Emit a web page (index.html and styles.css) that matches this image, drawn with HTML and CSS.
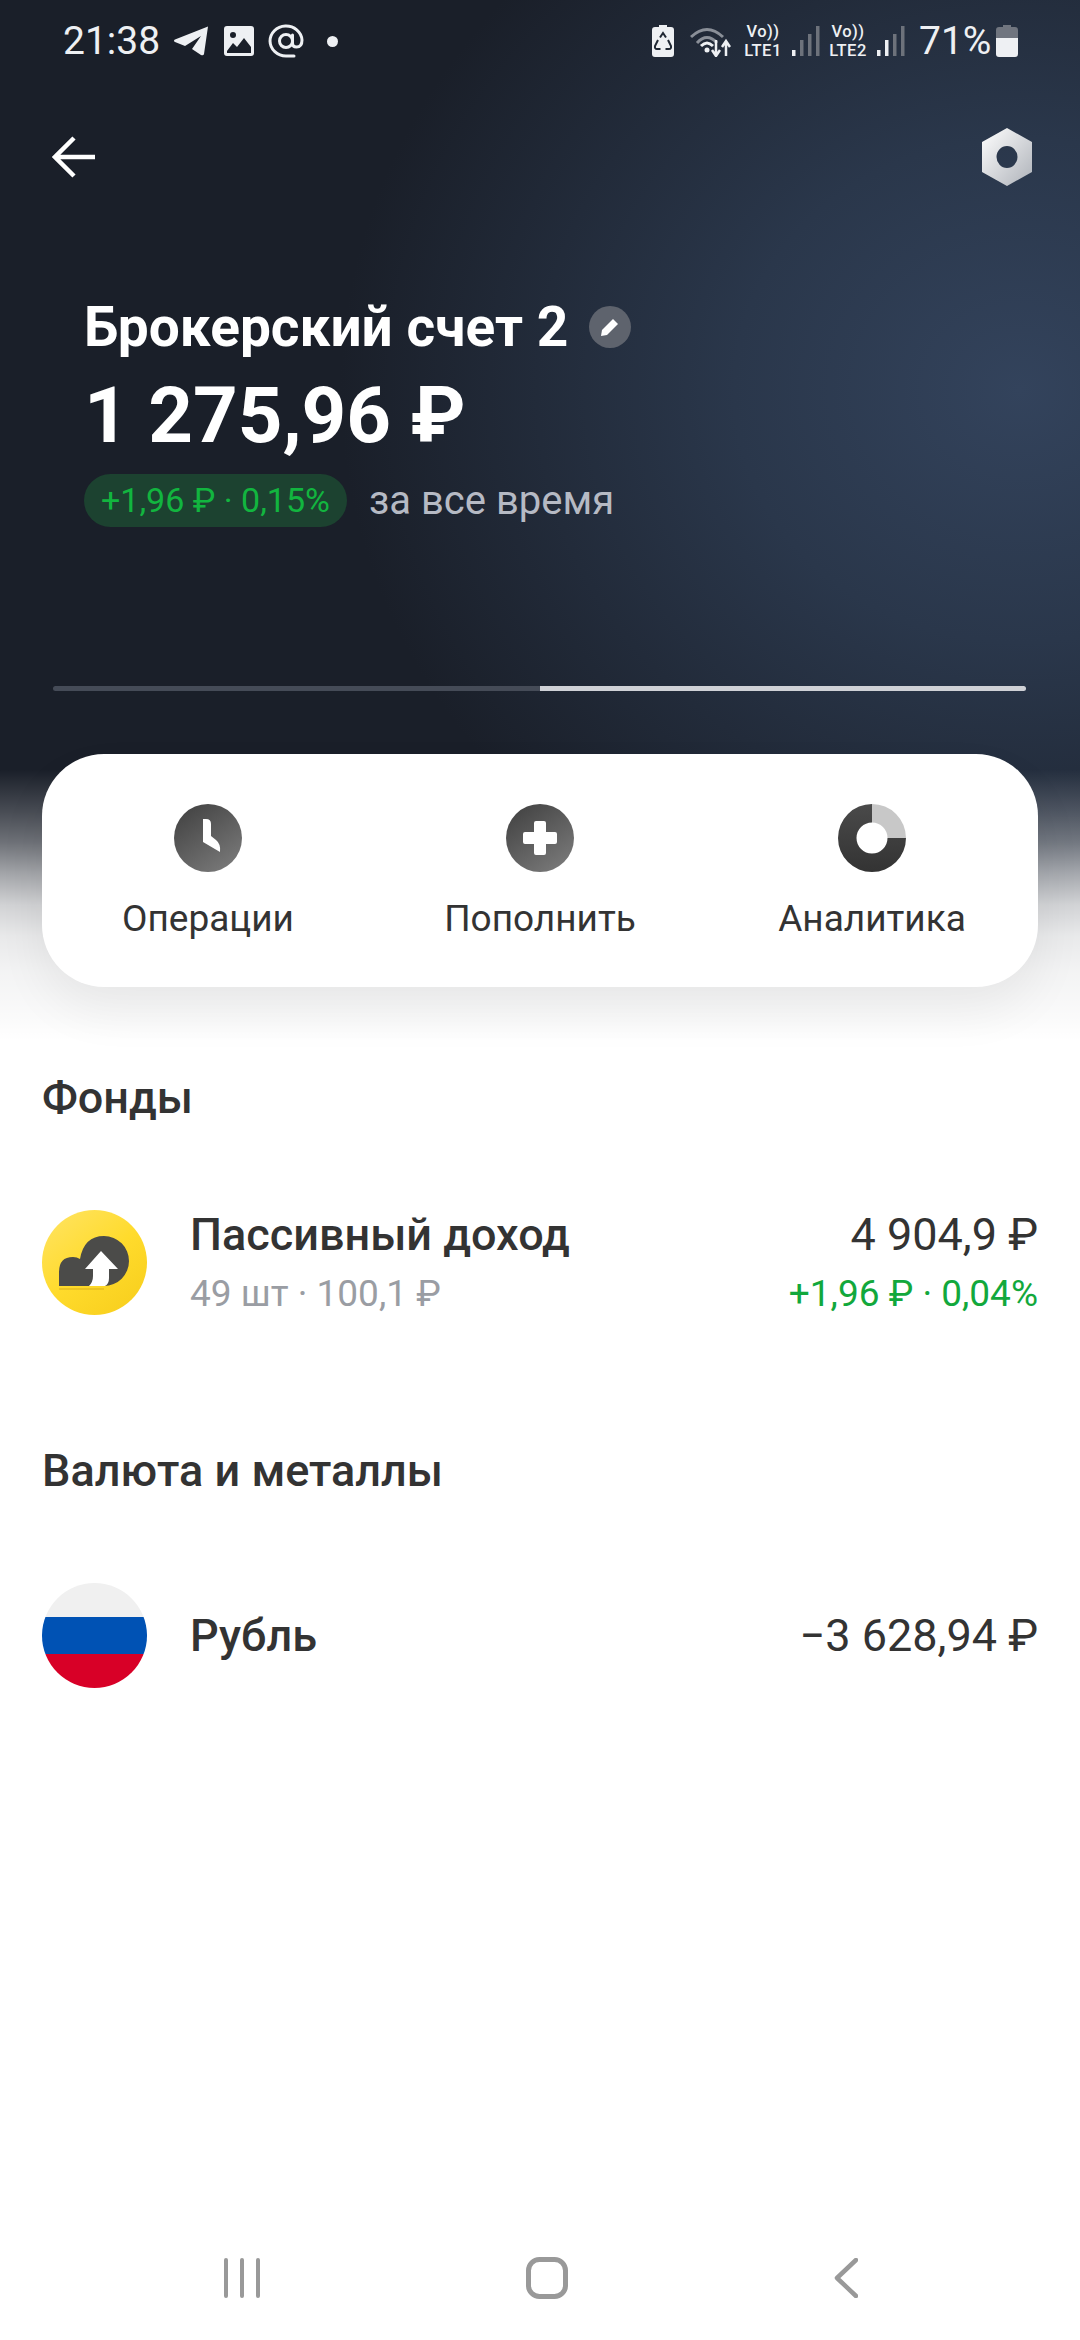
FILE: index.html
```html
<!DOCTYPE html>
<html lang="ru">
<head>
    <meta charset="UTF-8">
    <meta name="viewport" content="width=device-width, initial-scale=1.0">
    <title>Брокерский счет 2</title>
    <link rel="stylesheet" href="styles.css">
</head>
<body>
    <div class="screen">
        <header class="hero">
            <div class="status-bar">
                <div class="status-left">
                    <span class="clock">21:38</span>
                    <svg class="st-telegram" viewBox="0 0 35 30"><path d="M34 0.5 L30 28 Q29.5 30 27 29 L18 23 L27 10 L11 20 L1 16 Q-1 14.5 1 13.5 Z" fill="#eef0f3"/></svg>
                    <svg class="st-image" viewBox="0 0 30 30"><path fill-rule="evenodd" d="M3 0 H27 Q30 0 30 3 V27 Q30 30 27 30 H3 Q0 30 0 27 V3 Q0 0 3 0 Z M3 25 V27 H27 V21 L20 12 L13 21 L9 17 Z M9 6 A3 3 0 1 0 9 12 A3 3 0 1 0 9 6 Z" fill="#eef0f3"/></svg>
                    <svg class="st-at" viewBox="0 0 36 34"><circle cx="18" cy="17" r="6.5" fill="none" stroke="#eef0f3" stroke-width="3"/><path d="M24.5 11 V19 Q24.5 23 28.500 23 Q34 23 34 16 A16 15 0 1 0 18 32 H26" fill="none" stroke="#eef0f3" stroke-width="3" stroke-linecap="round"/></svg>
                    <span class="st-dot"></span>
                </div>
                <div class="status-right">
                    <svg class="st-saver" viewBox="0 0 22 32"><path fill-rule="evenodd" d="M7 0 H15 V2 H19 Q22 2 22 5 V29 Q22 32 19 32 H3 Q0 32 0 29 V5 Q0 2 3 2 H7 Z" fill="#eef0f3"/><path d="M8 12.500 L11 8 L14 12.500 M16 15 L19 21 Q19.500 24 17 24 H13.500 M8.500 24 H5 Q2.500 24 3 21 L6 15" fill="none" stroke="#1f2733" stroke-width="2"/></svg>
                    <svg class="st-wifi" viewBox="0 0 41 31"><path d="M1 11 Q17 -4 33 11" fill="none" stroke="#8a8f98" stroke-width="3"/><path d="M7 17 Q17 6 27 17" fill="none" stroke="#8a8f98" stroke-width="3"/><path d="M11 20 Q17 14 23 20" fill="none" stroke="#eef0f3" stroke-width="3"/><circle cx="17" cy="24" r="2.500" fill="#eef0f3"/><path d="M26 14 V29 M22 24 L26 30 L30 24 M36 30 V16 M32 21 L36 15 L40 21" fill="none" stroke="#eef0f3" stroke-width="2.500"/></svg>
                    <div class="volte"><span>Vo))</span><span>LTE1</span></div>
                    <svg class="st-signal" viewBox="0 0 28 30"><rect x="0" y="24" width="3.500" height="6" fill="#eef0f3"/><rect x="8" y="14" width="3.500" height="16" fill="#6d727b"/><rect x="16" y="8" width="3.500" height="22" fill="#6d727b"/><rect x="24" y="0" width="3.500" height="30" fill="#6d727b"/></svg>
                    <div class="volte"><span>Vo))</span><span>LTE2</span></div>
                    <svg class="st-signal" viewBox="0 0 28 30"><rect x="0" y="24" width="3.500" height="6" fill="#eef0f3"/><rect x="8" y="14" width="3.500" height="16" fill="#eef0f3"/><rect x="16" y="8" width="3.500" height="22" fill="#6d727b"/><rect x="24" y="0" width="3.500" height="30" fill="#6d727b"/></svg>
                    <span class="battery-pct">71%</span>
                    <svg class="st-battery" viewBox="0 0 22 32"><path d="M7 0 H15 V2 H19 Q22 2 22 5 V13 H0 V5 Q0 2 3 2 H7 Z" fill="#70757f"/><path d="M0 13 H22 V29 Q22 32 19 32 H3 Q0 32 0 29 Z" fill="#eef0f3"/></svg>
                </div>
            </div>

            <div class="top-bar">
                <svg class="back-arrow" viewBox="0 0 44 44"><path d="M43 22 H4 M22 3 L3 22 L22 41" fill="none" stroke="#fff" stroke-width="4.500"/></svg>
                <svg class="nut" viewBox="0 0 50 58">
                    <defs>
                        <linearGradient id="nutFill" x1="0" y1="0" x2="1" y2="1">
                            <stop offset="0" stop-color="#fff"/>
                            <stop offset="1" stop-color="#aeb2b9"/>
                        </linearGradient>
                    </defs>
                    <path fill-rule="evenodd" d="M25 0 L50 14 V44 L25 58 L0 44 V14 Z M25 18 A10.500 11 0 1 0 25 40 A10.500 11 0 1 0 25 18 Z" fill="url(#nutFill)"/>
                </svg>
            </div>

            <div class="account">
                <div class="account-name">
                    <h1>Брокерский счет 2</h1>
                    <span class="edit-badge">
                        <svg viewBox="0 0 20 20"><path d="M13 2 L18 7 L7 18 L1 19 L2 13 Z" fill="#fff"/></svg>
                    </span>
                </div>
                <div class="account-total">1 275,96 ₽</div>
                <div class="account-change">
                    <span class="change-pill">+1,96 ₽ · 0,15%</span>
                    <span class="change-label">за все время</span>
                </div>
            </div>

            <div class="pager">
                <div class="pager-part"></div>
                <div class="pager-part active"></div>
            </div>

            <nav class="actions">
                <div class="action">
                    <svg class="action-icon" viewBox="0 0 68 68">
                        <defs>
                            <linearGradient id="iconFill" x1="0.15" y1="0" x2="0.85" y2="1">
                                <stop offset="0" stop-color="#424242"/>
                                <stop offset="1" stop-color="#7b7b7b"/>
                            </linearGradient>
                        </defs>
                        <circle cx="34" cy="34" r="34" fill="url(#iconFill)"/>
                        <path d="M29 15 H32 Q37 15 37 20 V32 L42 36 Q47 40 46 48 L29 38 Z" fill="#fff"/>
                    </svg>
                    <span>Операции</span>
                </div>
                <div class="action">
                    <svg class="action-icon" viewBox="0 0 68 68">
                        <circle cx="34" cy="34" r="34" fill="url(#iconFill)"/>
                        <path d="M28 19 Q28 17 30 17 H38 Q40 17 40 19 V28 H49 Q51 28 51 30 V38 Q51 40 49 40 H40 V49 Q40 51 38 51 H30 Q28 51 28 49 V40 H19 Q17 40 17 38 V30 Q17 28 19 28 H28 Z" fill="#fff"/>
                    </svg>
                    <span>Пополнить</span>
                </div>
                <div class="action">
                    <svg class="action-icon" viewBox="0 0 68 68">
                        <defs>
                            <linearGradient id="donutDark" x1="0" y1="0" x2="0" y2="1">
                                <stop offset="0" stop-color="#4a4a4a"/>
                                <stop offset="1" stop-color="#333"/>
                            </linearGradient>
                        </defs>
                        <path fill-rule="evenodd" d="M34 0 A34 34 0 1 0 68 34 H49.500 A15.500 15.500 0 1 1 34 18.500 Z" fill="url(#donutDark)"/>
                        <path d="M34 0 A34 34 0 0 1 68 34 H49.500 A15.500 15.500 0 0 0 34 18.500 Z" fill="#c8c8c8"/>
                    </svg>
                    <span>Аналитика</span>
                </div>
            </nav>
        </header>

        <main class="content">
            <section class="group group-funds">
                <h2>Фонды</h2>
                <div class="row">
                    <svg class="row-icon" viewBox="0 0 105 105">
                        <defs>
                            <linearGradient id="coinFill" x1="0.1" y1="0.1" x2="0.8" y2="1">
                                <stop offset="0" stop-color="#ffe25a"/>
                                <stop offset="0.5" stop-color="#ffdb2c"/>
                                <stop offset="1" stop-color="#f8cf1e"/>
                            </linearGradient>
                        </defs>
                        <circle cx="52.500" cy="52.500" r="52.500" fill="url(#coinFill)"/>
                        <path d="M17 78 H62 V80 H17 Z" fill="#d9b01a" opacity="0.5"/>
                        <path d="M17 76 V62 Q17 47 31 47 Q35 47 38 49 Q42 26 62 26 A24.500 24.500 0 0 1 62 76 Z" fill="#4b4b49"/>
                        <path d="M59 41 L76 59 H67 V68 Q67 74 63 76 H47 Q51 72 51 66 V59 H43 Z" fill="#fff"/>
                    </svg>
                    <div class="row-main">
                        <div class="row-title">Пассивный доход</div>
                        <div class="row-sub">49 шт · 100,1 ₽</div>
                    </div>
                    <div class="row-values">
                        <div class="row-value">4 904,9 ₽</div>
                        <div class="row-gain">+1,96 ₽ · 0,04%</div>
                    </div>
                </div>
            </section>

            <section class="group group-currency">
                <h2>Валюта и металлы</h2>
                <div class="row">
                    <svg class="row-icon" viewBox="0 0 105 105">
                        <defs>
                            <clipPath id="flagClip"><circle cx="52.500" cy="52.500" r="52.500"/></clipPath>
                        </defs>
                        <g clip-path="url(#flagClip)">
                            <rect width="105" height="35" fill="#f0f0f0"/>
                            <rect y="34" width="105" height="37" fill="#0052b4"/>
                            <rect y="71" width="105" height="34" fill="#d80027"/>
                        </g>
                    </svg>
                    <div class="row-main">
                        <div class="row-title">Рубль</div>
                    </div>
                    <div class="row-values">
                        <div class="row-value">−3 628,94 ₽</div>
                    </div>
                </div>
            </section>
        </main>

        <footer class="nav-bar">
            <svg class="nav-recent" viewBox="0 0 36 40"><path d="M2 2 V38 M18 2 V38 M34 2 V38" fill="none" stroke="#999" stroke-width="4" stroke-linecap="round"/></svg>
            <svg class="nav-home" viewBox="0 0 42 42"><rect x="2.500" y="2.500" width="37" height="37" rx="11" fill="none" stroke="#999" stroke-width="5"/></svg>
            <svg class="nav-back" viewBox="0 0 24 40"><path d="M22 2 L3 20 L22 38" fill="none" stroke="#999" stroke-width="4.500" stroke-linecap="round" stroke-linejoin="round"/></svg>
        </footer>
    </div>
</body>
</html>
```

FILE: styles.css
```css
/* Account screen */
* {
    box-sizing: border-box;
}

body {
    margin: 0;
    font-family: Roboto, "Noto Sans", sans-serif;
    background-color: #fff;
    color: #333;
}

svg {
    display: block;
    flex-shrink: 0;
}

.screen {
    width: 1080px;
    height: 2340px;
    display: flex;
    flex-direction: column;
    overflow: hidden;
}

/* Dark header fading out to white behind the actions card */
.hero {
    height: 1040px;
    padding: 0 42px;
    background:
        linear-gradient(to bottom, rgba(255, 255, 255, 0) 74%, rgba(255, 255, 255, 0.2) 78%, rgba(255, 255, 255, 0.37) 81%, rgba(255, 255, 255, 0.6) 84%, rgba(255, 255, 255, 0.8) 87%, rgba(255, 255, 255, 0.9) 90%, rgba(255, 255, 255, 0.95) 93.5%, rgba(255, 255, 255, 0.98) 98%, #fff 100%),
        radial-gradient(ellipse 680px 600px at 1020px 390px, #33435c 0%, #2a374b 42%, rgba(32, 41, 54, 0) 100%),
        #1a1f29;
}

/* Status bar */
.status-bar {
    height: 82px;
    padding: 24px 62px 0 63px;
    margin: 0 -42px;
    display: flex;
    justify-content: space-between;
    align-items: flex-start;
    color: #eef0f3;
}

.status-left,
.status-right {
    display: flex;
    align-items: center;
    height: 34px;
}

.clock {
    font-size: 39px;
    line-height: 34px;
    width: 111px;
}

.st-telegram { width: 35px; height: 30px; }
.st-image { width: 30px; height: 30px; margin-left: 15px; }
.st-at { width: 36px; height: 34px; margin-left: 14px; }
.st-dot {
    width: 11px;
    height: 11px;
    margin-left: 23px;
    border-radius: 50%;
    background-color: #eef0f3;
}

.st-saver { width: 22px; height: 32px; }
.st-wifi { width: 41px; height: 31px; margin-left: 16px; }

.volte {
    width: 40px;
    margin-left: 12px;
    display: flex;
    flex-direction: column;
    align-items: center;
    font-size: 16.5px;
    line-height: 19.5px;
    letter-spacing: 0.5px;
    font-weight: 500;
}

.st-signal { width: 28px; height: 30px; margin-left: 9px; }
.volte + .st-signal { margin-right: -4px; }

.battery-pct {
    font-size: 39px;
    line-height: 34px;
    margin-left: 18px;
    width: 77px;
}

.st-battery { width: 22px; height: 32px; }

/* Back arrow and settings */
.top-bar {
    height: 104px;
    padding: 46px 6px 0 10px;
    display: flex;
    justify-content: space-between;
    align-items: flex-start;
}

.back-arrow {
    width: 44px;
    height: 44px;
    margin-top: 7px;
}

.nut {
    width: 50px;
    height: 58px;
}

/* Account summary */
.account {
    height: 500px;
    padding: 111px 0 0 42px;
}

.account-name {
    display: flex;
    align-items: center;
    gap: 21px;
    height: 60px;
}

.account-name h1 {
    margin: 0;
    font-size: 55px;
    font-weight: 700;
    color: #fff;
}

.edit-badge {
    width: 42px;
    height: 42px;
    border-radius: 50%;
    background-color: #5e636d;
    display: flex;
    align-items: center;
    justify-content: center;
}

.edit-badge svg {
    width: 20px;
    height: 20px;
}

.account-total {
    margin-top: 14px;
    font-size: 78px;
    line-height: 90px;
    font-weight: 700;
    color: #fff;
}

.account-change {
    display: flex;
    align-items: center;
    margin-top: 13px;
    height: 53px;
}

.change-pill {
    height: 53px;
    width: 263px;
    border-radius: 27px;
    background-color: #1c4230;
    color: #12b53f;
    font-size: 34px;
    line-height: 53px;
    text-align: center;
}

.change-label {
    margin-left: 22px;
    font-size: 40px;
    color: #b6bac4;
}

/* Slide indicator */
.pager {
    display: flex;
    height: 5px;
    margin: 0 12px 0 11px;
}

.pager-part {
    flex: 1;
    background-color: #454b57;
    border-radius: 3px 0 0 3px;
}

.pager-part.active {
    background-color: #cfd1d6;
    border-radius: 0 3px 3px 0;
}

/* Actions card */
.actions {
    height: 233px;
    margin-top: 63px;
    padding-top: 50px;
    display: grid;
    grid-template-columns: repeat(3, 332px);
    background-color: #fff;
    border-radius: 62px;
    box-shadow: 0 24px 50px rgba(0, 0, 0, 0.06);
}

.action {
    display: flex;
    flex-direction: column;
    align-items: center;
    font-size: 37px;
    color: #333;
}

.action-icon {
    width: 68px;
    height: 68px;
    margin-bottom: 25px;
}

/* Lists */
.content {
    flex: 1;
    padding: 0 42px;
}

.group h2 {
    margin: 0;
    font-size: 45px;
    line-height: 48px;
    font-weight: 500;
    color: #333;
}

.group-funds {
    padding-top: 34px;
}

.group-currency {
    padding-top: 132px;
}

.row {
    display: flex;
    align-items: center;
    margin-top: 88px;
}

.row-icon {
    width: 105px;
    height: 105px;
}

.row-main {
    flex: 1;
    margin-left: 43px;
}

.row-title,
.row-value {
    font-size: 45px;
    line-height: 50px;
}

.row-title {
    font-weight: 500;
}

.row-sub,
.row-gain {
    margin-top: 13px;
    font-size: 37px;
    line-height: 42px;
}

.row-sub {
    color: #9a9da3;
}

.row-values {
    text-align: right;
}

.row-gain {
    color: #12a83c;
}

/* System navigation */
.nav-bar {
    height: 104px;
    display: flex;
    align-items: flex-start;
    padding: 22px 222px 0 224px;
    justify-content: space-between;
}

.nav-recent { width: 36px; height: 40px; }
.nav-home { width: 42px; height: 42px; margin-top: -1px; }
.nav-back { width: 24px; height: 40px; }
```
